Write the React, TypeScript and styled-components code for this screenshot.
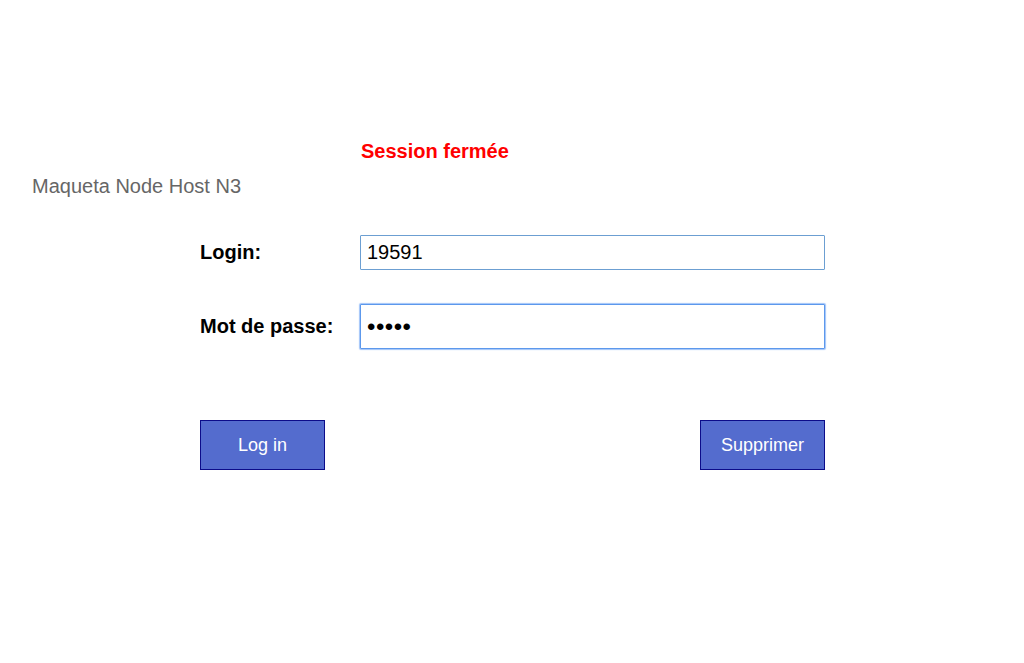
import React from "react";
import styled, { createGlobalStyle } from "styled-components";

const GlobalStyle = createGlobalStyle`
  html, body {
    margin: 0;
    padding: 0;
    background: #ffffff;
    font-family: "Liberation Sans", Arial, sans-serif;
  }
`;

const Page = styled.div`
  width: 1024px;
  height: 663px;
  box-sizing: border-box;
  padding-top: 140px;
  display: flex;
  flex-direction: column;
`;

const Status = styled.div`
  margin-left: 361px;
  font-size: 20px;
  line-height: 23px;
  font-weight: bold;
  color: #ff0000;
`;

const Subtitle = styled.div`
  margin-left: 32px;
  margin-top: 12px;
  font-size: 20px;
  line-height: 23px;
  color: #666666;
`;

const Form = styled.form`
  margin: 37px 0 0 200px;
  width: 625px;
  display: flex;
  flex-direction: column;
`;

const Row = styled.div<{ $height: number; $gap: number }>`
  display: grid;
  grid-template-columns: 160px 465px;
  align-items: center;
  height: ${(p) => p.$height}px;
  margin-top: ${(p) => p.$gap}px;
`;

const Label = styled.label`
  font-size: 20px;
  font-weight: bold;
  color: #000000;
  line-height: 23px;
`;

const Input = styled.input<{ $focused?: boolean; $masked?: boolean }>`
  box-sizing: border-box;
  width: 465px;
  height: 100%;
  margin: 0;
  padding: 0 6px;
  font-family: "Liberation Sans", Arial, sans-serif;
  font-size: ${(p) => (p.$masked ? 24 : 20)}px;
  letter-spacing: ${(p) => (p.$masked ? "0.5px" : "normal")};
  color: #000000;
  background: #ffffff;
  outline: none;
  border: 1px solid ${(p) => (p.$focused ? "#5c98ec" : "#6c9fd2")};
  box-shadow: ${(p) => (p.$focused ? "0 0 1px 1px rgba(120, 170, 245, 0.7)" : "none")};
  border-radius: 1px;
`;

const Actions = styled.div`
  margin-top: 71px;
  display: flex;
  justify-content: space-between;
`;

const Button = styled.button`
  box-sizing: border-box;
  width: 125px;
  height: 50px;
  margin: 0;
  padding: 0;
  background: #546cce;
  border: 1px solid #0c0c8a;
  color: #ffffff;
  font-family: "Liberation Sans", Arial, sans-serif;
  font-size: 18px;
  cursor: pointer;
`;

export default function App() {
  return (
    <>
      <GlobalStyle />
      <Page>
        <Status>Session fermée</Status>
        <Subtitle>Maqueta Node Host N3</Subtitle>
        <Form onSubmit={(e) => e.preventDefault()}>
          <Row $height={35} $gap={0}>
            <Label htmlFor="login">Login:</Label>
            <Input id="login" type="text" defaultValue="19591" />
          </Row>
          <Row $height={45} $gap={34}>
            <Label htmlFor="pwd">Mot de passe:</Label>
            <Input id="pwd" type="password" defaultValue="12345" $focused $masked />
          </Row>
          <Actions>
            <Button type="button">Log in</Button>
            <Button type="button">Supprimer</Button>
          </Actions>
        </Form>
      </Page>
    </>
  );
}
